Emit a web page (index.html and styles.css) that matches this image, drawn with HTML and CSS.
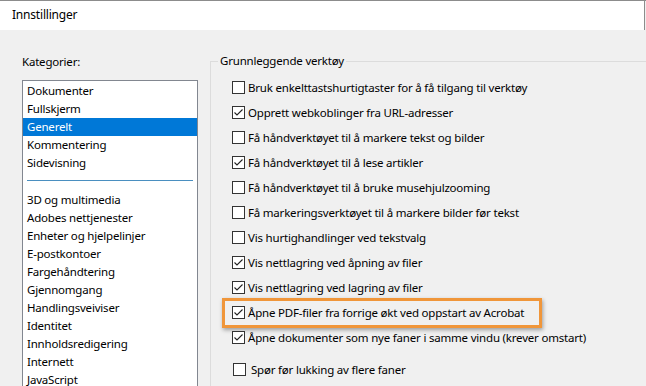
FILE: index.html
```html
<!DOCTYPE html>
<html lang="no">
<head>
    <meta charset="UTF-8">
    <title>Innstillinger</title>
    <link rel="stylesheet" href="styles.css">
</head>
<body>
    <div class="window">
        <div class="titlebar">Innstillinger</div>
        <div class="content">
            <div class="left">
                <div class="label">Kategorier:</div>
                <ul class="listbox">
                    <li>Dokumenter</li>
                    <li>Fullskjerm</li>
                    <li class="selected">Generelt</li>
                    <li>Kommentering</li>
                    <li>Sidevisning</li>
                    <li class="sep"></li>
                    <li>3D og multimedia</li>
                    <li>Adobes nettjenester</li>
                    <li>Enheter og hjelpelinjer</li>
                    <li>E-postkontoer</li>
                    <li>Fargehåndtering</li>
                    <li>Gjennomgang</li>
                    <li>Handlingsveiviser</li>
                    <li>Identitet</li>
                    <li>Innholdsredigering</li>
                    <li>Internett</li>
                    <li>JavaScript</li>
                </ul>
            </div>
            <fieldset class="group">
                <legend>Grunnleggende verktøy</legend>
                <div class="row"><span class="box"></span>Bruk enkelttastshurtigtaster for å få tilgang til verktøy</div>
                <div class="row"><span class="box checked"></span>Opprett webkoblinger fra URL-adresser</div>
                <div class="row"><span class="box"></span>Få håndverktøyet til å markere tekst og bilder</div>
                <div class="row"><span class="box checked"></span>Få håndverktøyet til å lese artikler</div>
                <div class="row"><span class="box"></span>Få håndverktøyet til å bruke musehjulzooming</div>
                <div class="row"><span class="box"></span>Få markeringsverktøyet til å markere bilder før tekst</div>
                <div class="row"><span class="box"></span>Vis hurtighandlinger ved tekstvalg</div>
                <div class="row"><span class="box checked"></span>Vis nettlagring ved åpning av filer</div>
                <div class="row"><span class="box checked"></span>Vis nettlagring ved lagring av filer</div>
                <div class="row highlight"><span class="box checked"></span>Åpne PDF-filer fra forrige økt ved oppstart av Acrobat</div>
                <div class="row"><span class="box checked"></span>Åpne dokumenter som nye faner i samme vindu (krever omstart)</div>
                <div class="row last"><span class="box"></span>Spør før lukking av flere faner</div>
            </fieldset>
        </div>
    </div>
</body>
</html>
```

FILE: styles.css
```css
body {
    margin: 0;
    font-family: "Noto Sans", "Open Sans", sans-serif;
    font-size: 11.5px;
    letter-spacing: -0.2px;
    color: #000;
    background: #f0f0f0;
    overflow: hidden;
}

.window {
    width: 646px;
    height: 386px;
    overflow: hidden;
    border-top: 1px solid #8c8c8c;
    box-sizing: border-box;
}

.titlebar {
    height: 29px;
    line-height: 28px;
    padding-left: 12px;
    font-size: 12px;
    background: #ffffff;
    border-right: 1px solid #8c8c8c;
    margin-right: 1px;
}

.content {
    display: flex;
    background: #f0f0f0;
}

.left {
    width: 188px;
    padding-left: 22px;
}

.label {
    margin-top: 23px;
    height: 27px;
    line-height: 18px;
}

.listbox {
    list-style: none;
    margin: 0;
    padding: 1px 0 0;
    width: 174px;
    height: 320px;
    background: #ffffff;
    border: 1px solid #828790;
}

.listbox li {
    height: 18px;
    line-height: 18px;
    padding-left: 4px;
}

.listbox li.selected {
    background: #0078d7;
    color: #ffffff;
}

.listbox li.sep {
    height: 19px;
    display: flex;
    align-items: center;
    padding: 0 4px;
}

.listbox li.sep::before {
    content: "";
    flex: 1;
    height: 1px;
    margin-top: -2px;
    background: #4a8fc0;
}

.group {
    flex: 1;
    margin: 23px 0 0;
    padding: 6px 0 0 21px;
    border: none;
    border-top: 1px solid #dcdcdc;
    border-left: 1px solid #dcdcdc;
    min-width: 0;
}

.group legend {
    margin-left: -14px;
    padding: 0 2px;
    line-height: 16px;
}

.row {
    position: relative;
    height: 25px;
    display: flex;
    align-items: center;
    gap: 3px;
    white-space: nowrap;
}

.row.last {
    margin-top: 7px;
    padding-left: 1px;
    gap: 5px;
}

.box {
    width: 11px;
    height: 11px;
    flex: none;
    background: #ffffff;
    border: 1px solid #333333;
}

.box.checked {
    background: #ffffff url("data:image/svg+xml;utf8,<svg xmlns='http://www.w3.org/2000/svg' width='11' height='11'><polyline points='1.5,5.5 4,8 9.5,2.5' fill='none' stroke='%23222' stroke-width='1.1'/></svg>") no-repeat center;
}

.row.highlight::after {
    content: "";
    position: absolute;
    left: -10px;
    top: -2px;
    width: 314px;
    height: 24px;
    border: 3px solid #f0963a;
    box-shadow: 1px 2px 4px rgba(0, 0, 0, 0.35);
}
```
